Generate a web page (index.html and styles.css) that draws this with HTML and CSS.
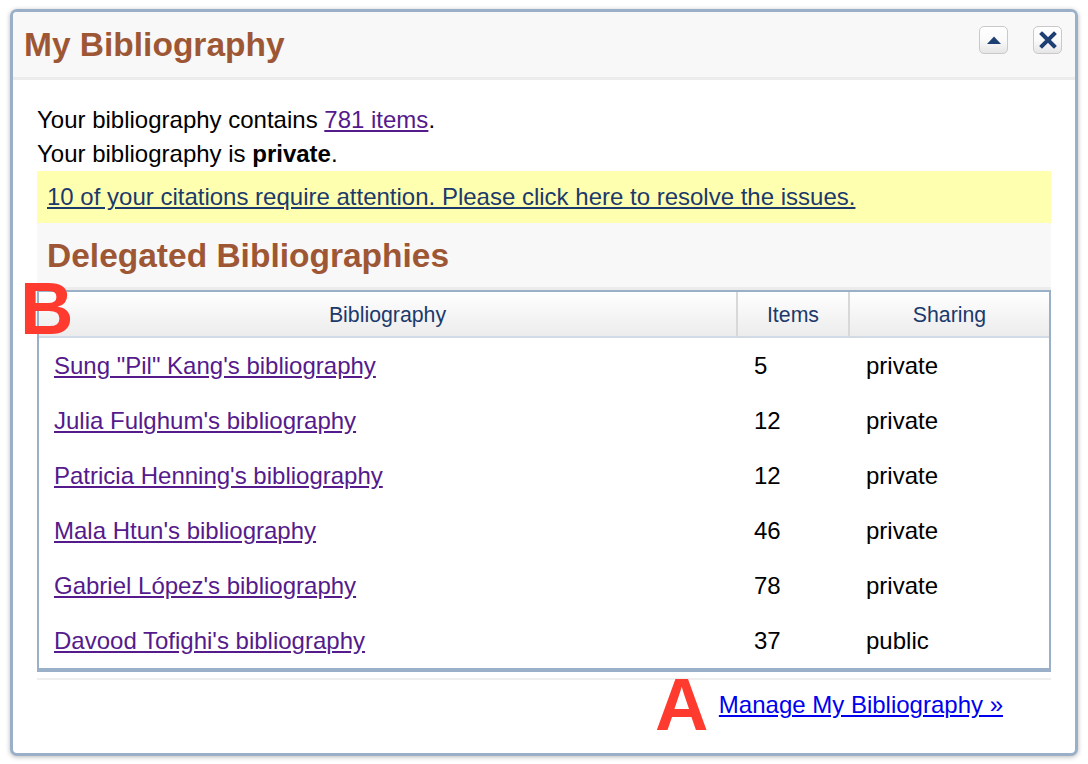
FILE: index.html
```html
<!DOCTYPE html>
<html>
<head>
<meta charset="utf-8">
<link rel="stylesheet" href="styles.css">
</head>
<body>
<div class="panel">
  <div class="panel-head">
    <h1 class="panel-title">My Bibliography</h1>
    <div class="tools">
      <button class="tool-btn" aria-label="Collapse">
        <svg width="16" height="10" viewBox="0 0 16 10"><path d="M1 9 L8 1.5 L15 9 Z" fill="#1d3f73"/></svg>
      </button>
      <button class="tool-btn" aria-label="Close">
        <svg width="18" height="18" viewBox="0 0 18 18"><path d="M3 3 L15 15 M15 3 L3 15" stroke="#1d3f73" stroke-width="4" stroke-linecap="square"/></svg>
      </button>
    </div>
  </div>
  <div class="panel-body">
    <p class="line">Your bibliography contains <a class="visited" href="#">781 items</a>.</p>
    <p class="line">Your bibliography is <b>private</b>.</p>
    <div class="notice"><a href="#">10 of your citations require attention. Please click here to resolve the issues.</a></div>
    <div class="section-head"><h2>Delegated Bibliographies</h2></div>
    <table class="bib-table">
      <thead>
        <tr><th class="c1">Bibliography</th><th class="c2">Items</th><th class="c3">Sharing</th></tr>
      </thead>
      <tbody>
        <tr><td><a class="visited" href="#">Sung "Pil" Kang's bibliography</a></td><td>5</td><td>private</td></tr>
        <tr><td><a class="visited" href="#">Julia Fulghum's bibliography</a></td><td>12</td><td>private</td></tr>
        <tr><td><a class="visited" href="#">Patricia Henning's bibliography</a></td><td>12</td><td>private</td></tr>
        <tr><td><a class="visited" href="#">Mala Htun's bibliography</a></td><td>46</td><td>private</td></tr>
        <tr><td><a class="visited" href="#">Gabriel López's bibliography</a></td><td>78</td><td>private</td></tr>
        <tr><td><a class="visited" href="#">Davood Tofighi's bibliography</a></td><td>37</td><td>public</td></tr>
      </tbody>
    </table>
    <div class="panel-foot"><a class="manage" href="#">Manage My Bibliography »</a></div>
  </div>
</div>
<span class="marker marker-b">B</span>
<span class="marker marker-a">A</span>
</body>
</html>
```
FILE: styles.css
```css
html, body {
  margin: 0;
  padding: 0;
  background: #ffffff;
}
body {
  position: relative;
  width: 1088px;
  height: 764px;
  font-family: "Liberation Sans", Arial, sans-serif;
  color: #000;
}
.panel {
  margin: 9px 0 0 10px;
  width: 1068px;
  box-sizing: border-box;
  border: 3px solid #9ab0c8;
  border-radius: 7px;
  box-shadow: 0 1px 5px rgba(0, 0, 0, 0.28);
  background: #fff;
  overflow: hidden;
}
.panel-head {
  height: 65px;
  background: #f8f8f8;
  border-bottom: 3px solid #ececec;
  display: flex;
  justify-content: space-between;
  align-items: center;
  padding: 0 13px 0 11px;
}
.panel-title {
  margin: 0;
  font-size: 33.5px;
  font-weight: bold;
  color: #9e5735;
  line-height: 40px;
  padding-top: 1px;
}
.tools {
  display: flex;
  gap: 25px;
  align-self: flex-start;
  margin-top: 14px;
}
.tool-btn {
  width: 29px;
  height: 28px;
  padding: 0;
  border: 1px solid #c9c9c9;
  border-radius: 5px;
  background: linear-gradient(#ffffff 0%, #fafafa 50%, #e6e6e6 100%);
  display: flex;
  align-items: center;
  justify-content: center;
}
.panel-body {
  padding: 23px 24px 0 24px;
}
.line {
  margin: 0;
  font-size: 24px;
  line-height: 34px;
}
a {
  color: #0000ee;
}
a.visited {
  color: #551a8b;
}
.notice {
  background: #ffffb0;
  height: 52px;
  line-height: 52px;
  padding: 0 10px;
  font-size: 24px;
}
.notice a {
  color: #1b3a6b;
}
.section-head {
  background: #f8f8f8;
  height: 64px;
  border-bottom: 3px solid #ececec;
  display: flex;
  align-items: center;
  padding-left: 10px;
}
.section-head h2 {
  margin: 0;
  font-size: 33.5px;
  font-weight: bold;
  color: #9e5735;
  line-height: 40px;
  padding-top: 1px;
}
.bib-table {
  width: 100%;
  table-layout: fixed;
  border-collapse: separate;
  border-spacing: 0;
  border: 2px solid #9ab0c8;
  border-bottom-width: 4px;
  box-sizing: border-box;
}
.bib-table th {
  box-sizing: border-box;
  height: 46px;
  font-size: 21.3px;
  font-weight: normal;
  color: #1b3a6b;
  text-align: center;
  background: linear-gradient(#ffffff, #ececec);
  border-bottom: 2px solid #d0dbe6;
  padding: 2px 0 0 0;
}
.bib-table th.c1 { width: 697px; }
.bib-table th.c2 { width: 112px; border-left: 2px solid #d8d8d8; }
.bib-table th.c3 { width: 201px; border-left: 2px solid #d8d8d8; }
.bib-table td {
  height: 55px;
  padding: 0 0 0 16px;
  font-size: 24px;
  border-left: 2px solid transparent;
  box-sizing: border-box;
}
.bib-table td:first-child {
  border-left: none;
  padding-left: 15px;
}
.panel-foot {
  margin-top: 6px;
  border-top: 2px solid #eeeeee;
  padding: 13px 48px 36px 0;
  text-align: right;
  font-size: 24px;
  line-height: 24px;
}
.marker {
  position: absolute;
  font-family: "Liberation Sans", Arial, sans-serif;
  font-weight: bold;
  font-size: 74px;
  line-height: 74px;
  color: #ff3b30;
}
.marker-b {
  left: 20px;
  top: 272px;
}
.marker-a {
  left: 655px;
  top: 668px;
}
```
